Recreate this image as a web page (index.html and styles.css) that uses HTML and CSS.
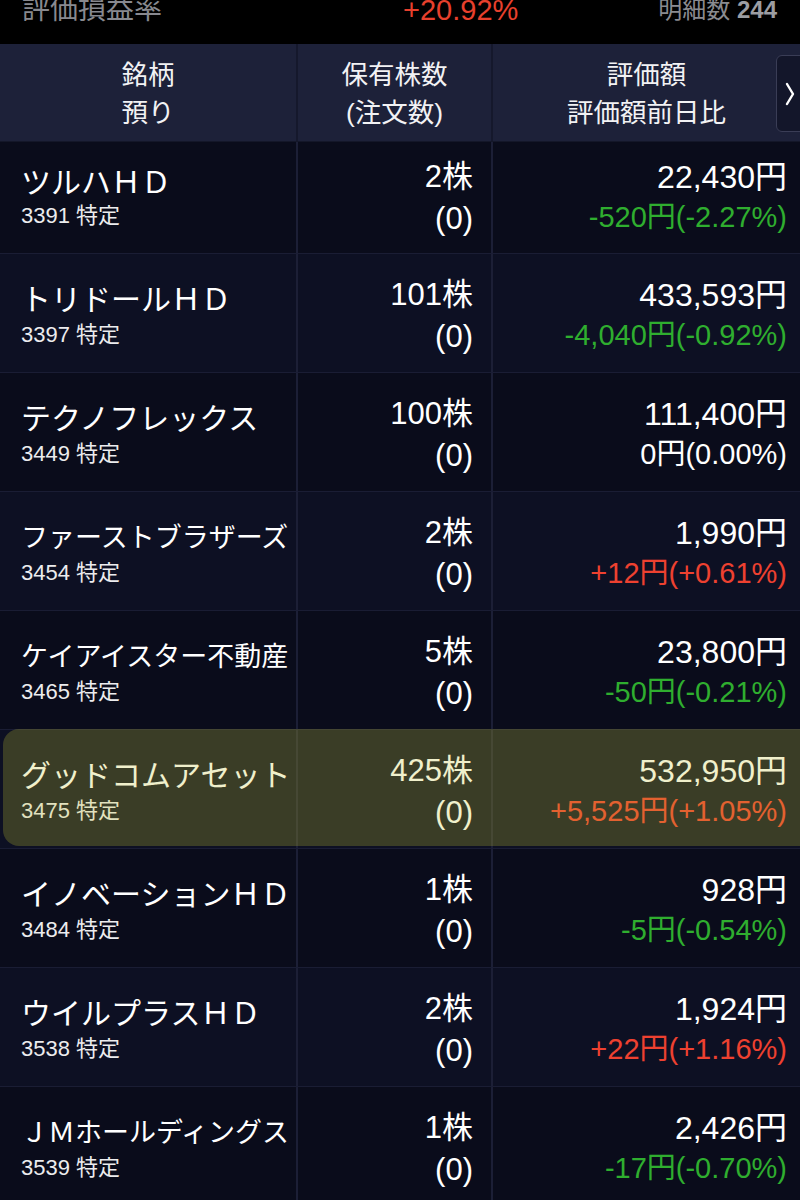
FILE: index.html
```html
<!DOCTYPE html>
<html lang="ja">
<head>
    <meta charset="UTF-8">
    <meta name="viewport" content="width=device-width, initial-scale=1.0">
    <title>保有株式</title>
    <link rel="stylesheet" href="styles.css">
</head>
<body>
    <!-- Summary bar -->
    <div class="topbar">
        <span class="tb-label">評価損益率</span>
        <span class="tb-rate">+20.92%</span>
        <span class="tb-count">明細数 <b>244</b></span>
    </div>

    <!-- Table header -->
    <div class="table-head">
        <div class="head-cell"><p>銘柄</p><p>預り</p></div>
        <div class="head-cell"><p>保有株数</p><p>(注文数)</p></div>
        <div class="head-cell head-last"><p>評価額</p><p>評価額前日比</p></div>
        <div class="more-btn">
            <svg width="10" height="26" viewBox="0 0 10 26"><polyline points="2,3 8,13 2,23" fill="none" stroke="#fff" stroke-width="2.4" stroke-linecap="round" stroke-linejoin="round"/></svg>
        </div>
    </div>

    <!-- Holdings -->
    <div class="rows">
        <div class="row row-first">
            <div class="cell c-name"><p class="name">ツルハＨＤ</p><p class="sub">3391 特定</p></div>
            <div class="cell c-qty"><p>2株</p><p>(0)</p></div>
            <div class="cell c-val"><p class="val">22,430円</p><p class="chg down">-520円(-2.27%)</p></div>
        </div>
        <div class="row">
            <div class="cell c-name"><p class="name">トリドールＨＤ</p><p class="sub">3397 特定</p></div>
            <div class="cell c-qty"><p>101株</p><p>(0)</p></div>
            <div class="cell c-val"><p class="val">433,593円</p><p class="chg down">-4,040円(-0.92%)</p></div>
        </div>
        <div class="row">
            <div class="cell c-name"><p class="name">テクノフレックス</p><p class="sub">3449 特定</p></div>
            <div class="cell c-qty"><p>100株</p><p>(0)</p></div>
            <div class="cell c-val"><p class="val">111,400円</p><p class="chg">0円(0.00%)</p></div>
        </div>
        <div class="row">
            <div class="cell c-name"><p class="name name-long">ファーストブラザーズ</p><p class="sub">3454 特定</p></div>
            <div class="cell c-qty"><p>2株</p><p>(0)</p></div>
            <div class="cell c-val"><p class="val">1,990円</p><p class="chg up">+12円(+0.61%)</p></div>
        </div>
        <div class="row">
            <div class="cell c-name"><p class="name name-long">ケイアイスター不動産</p><p class="sub">3465 特定</p></div>
            <div class="cell c-qty"><p>5株</p><p>(0)</p></div>
            <div class="cell c-val"><p class="val">23,800円</p><p class="chg down">-50円(-0.21%)</p></div>
        </div>
        <div class="row row-marked">
            <div class="cell c-name"><p class="name">グッドコムアセット</p><p class="sub">3475 特定</p></div>
            <div class="cell c-qty"><p>425株</p><p>(0)</p></div>
            <div class="cell c-val"><p class="val">532,950円</p><p class="chg up">+5,525円(+1.05%)</p></div>
        </div>
        <div class="row">
            <div class="cell c-name"><p class="name">イノベーションＨＤ</p><p class="sub">3484 特定</p></div>
            <div class="cell c-qty"><p>1株</p><p>(0)</p></div>
            <div class="cell c-val"><p class="val">928円</p><p class="chg down">-5円(-0.54%)</p></div>
        </div>
        <div class="row">
            <div class="cell c-name"><p class="name">ウイルプラスＨＤ</p><p class="sub">3538 特定</p></div>
            <div class="cell c-qty"><p>2株</p><p>(0)</p></div>
            <div class="cell c-val"><p class="val">1,924円</p><p class="chg up">+22円(+1.16%)</p></div>
        </div>
        <div class="row">
            <div class="cell c-name"><p class="name name-long">ＪＭホールディングス</p><p class="sub">3539 特定</p></div>
            <div class="cell c-qty"><p>1株</p><p>(0)</p></div>
            <div class="cell c-val"><p class="val">2,426円</p><p class="chg down">-17円(-0.70%)</p></div>
        </div>
    </div>
</body>
</html>
```

FILE: styles.css
```css
/* Basic reset */
* {
    margin: 0;
    padding: 0;
    box-sizing: border-box;
}

body {
    background-color: #0b0d1d;
    color: #fff;
    font-family: "Liberation Sans", "Noto Sans CJK JP", sans-serif;
    height: 1200px;
    overflow: hidden;
}

/* Summary bar */
.topbar {
    display: grid;
    grid-template-columns: 381px 1fr auto;
    align-items: start;
    height: 44px;
    padding: 0 23px 0 22px;
    background-color: #000;
    line-height: 20px;
    overflow: hidden;
}

.tb-label {
    color: #88898f;
    font-size: 28px;
}

.tb-rate {
    color: #e8402d;
    font-size: 29px;
}

.tb-count {
    color: #8a8b90;
    font-size: 24px;
}

.tb-count b {
    color: #9c9da2;
}

/* Table header */
.table-head {
    position: relative;
    display: grid;
    grid-template-columns: 298px 195px 1fr;
    height: 98px;
    background-color: #1d2139;
    border-bottom: 1px solid #141729;
}

.head-cell {
    padding-top: 12px;
    text-align: center;
    font-size: 26.5px;
    line-height: 38px;
    color: #f2f2f4;
    border-right: 2px solid #15182c;
}

.head-cell.head-last {
    border-right: none;
}

.more-btn {
    position: absolute;
    top: 11px;
    right: -8px;
    width: 32px;
    height: 77px;
    display: flex;
    align-items: center;
    padding-left: 8px;
    background-color: #13162a;
    border: 1px solid #3a3d56;
    border-radius: 6px;
}

/* Rows */
.row {
    position: relative;
    display: grid;
    grid-template-columns: 298px 195px 1fr;
    height: 119px;
    border-bottom: 1px solid #1a1d34;
}

.row:nth-child(odd) {
    background-color: #0a0c1b;
}

.row:nth-child(even) {
    background-color: #0d1023;
}

.row-first {
    height: 112px;
}

.cell {
    border-right: 2px solid #1c1f36;
}

.c-name {
    padding: 29px 0 0 21px;
}

.row-first .c-name {
    padding-top: 24px;
}

.name {
    font-size: 30px;
    line-height: 34px;
    white-space: nowrap;
}

.name-long {
    font-size: 27px;
}

.sub {
    font-size: 22px;
    line-height: 36px;
    color: #ececee;
}

.row-first .sub {
    line-height: 32px;
}

.c-qty {
    padding: 20px 18px 0 0;
    text-align: right;
    font-size: 31px;
    line-height: 42px;
}

.row-first .c-qty {
    padding-top: 14px;
}

.c-val {
    border-right: none;
    padding: 21px 13px 0 0;
    text-align: right;
}

.row-first .c-val {
    padding-top: 15px;
}

.val {
    font-size: 32px;
    line-height: 40px;
}

.chg {
    font-size: 29px;
    line-height: 40px;
}

.chg.down {
    color: #2fae2f;
}

.chg.up {
    color: #ee4130;
}

/* Highlighter mark over one row */
.row-marked::after {
    content: "";
    position: absolute;
    top: -1px;
    right: 0;
    bottom: 2px;
    left: 3px;
    background-color: rgba(196, 194, 46, 0.25);
    border-radius: 16px 0 0 16px;
}
```
